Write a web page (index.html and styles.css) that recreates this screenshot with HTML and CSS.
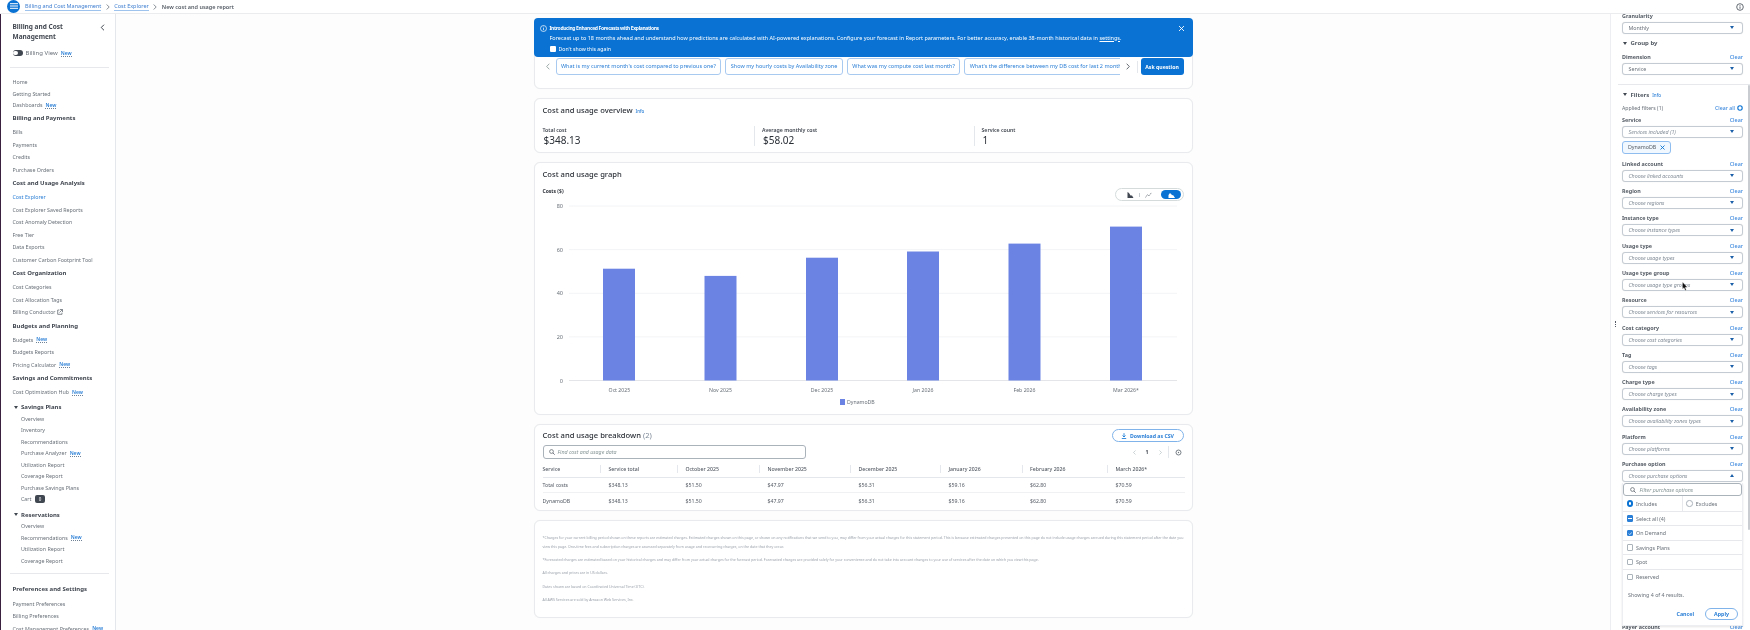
FILE: index.html
```html
<!DOCTYPE html>
<html lang="en">
<head>
<meta charset="utf-8">
<title>New cost and usage report</title>
<link rel="stylesheet" href="styles.css">
</head>
<body>
<div class="page">
  <header class="topbar">
    <button class="menu-btn" aria-label="Menu"><svg width="8" height="6" viewBox="0 0 8 6"><path d="M0 .7h8M0 3h8M0 5.3h8" stroke="#fff" stroke-width="1"/></svg></button>
    <nav class="crumbs">
      <a class="crumb-link">Billing and Cost Management</a><span class="crumb-sep"><svg width="4" height="6" viewBox="0 0 4 6"><path d="M.7.5 3.2 3 .7 5.5" fill="none" stroke="#687078" stroke-width=".8"/></svg></span>
      <a class="crumb-link">Cost Explorer</a><span class="crumb-sep"><svg width="4" height="6" viewBox="0 0 4 6"><path d="M.7.5 3.2 3 .7 5.5" fill="none" stroke="#687078" stroke-width=".8"/></svg></span>
      <span class="crumb-current">New cost and usage report</span>
    </nav>
    <svg class="top-info" width="8" height="8" viewBox="0 0 8 8"><circle cx="4" cy="4" r="3.3" fill="none" stroke="#545b64" stroke-width=".9"/><path d="M4 3.4v2.4M4 2v.8" stroke="#545b64" stroke-width=".9"/></svg>
  </header>

  <div class="layout">
    <aside class="sidebar">
      <div class="side-title-row">
        <h2 class="side-title">Billing and Cost Management</h2>
        <svg class="side-collapse" width="5" height="7" viewBox="0 0 5 7"><path d="M4 .7 1.2 3.5 4 6.3" fill="none" stroke="#414750" stroke-width="1"/></svg>
      </div>
      <div class="billing-view"><span class="switch"></span><span>Billing View</span><span class="new">New</span></div>
      <hr class="side-rule side-rule--first">
      <a class="nav-item nav-item--tight">Home</a>
      <a class="nav-item nav-item--tight">Getting Started</a>
      <a class="nav-item nav-item--tight">Dashboards<span class="new">New</span></a>
      <h3 class="nav-head">Billing and Payments</h3>
      <a class="nav-item">Bills</a>
      <a class="nav-item">Payments</a>
      <a class="nav-item">Credits</a>
      <a class="nav-item">Purchase Orders</a>
      <h3 class="nav-head">Cost and Usage Analysis</h3>
      <a class="nav-item nav-item--active">Cost Explorer</a>
      <a class="nav-item">Cost Explorer Saved Reports</a>
      <a class="nav-item">Cost Anomaly Detection</a>
      <a class="nav-item">Free Tier</a>
      <a class="nav-item">Data Exports</a>
      <a class="nav-item">Customer Carbon Footprint Tool</a>
      <h3 class="nav-head">Cost Organization</h3>
      <a class="nav-item">Cost Categories</a>
      <a class="nav-item">Cost Allocation Tags</a>
      <a class="nav-item">Billing Conductor<svg class="ext" width="6" height="6" viewBox="0 0 6 6"><path d="M2.4 1H.7v4.300h4.300V3.600M3 .5h2.500V3M5.300.7 2.500 3.500" fill="none" stroke="#545b64" stroke-width=".7"/></svg></a>
      <h3 class="nav-head">Budgets and Planning</h3>
      <a class="nav-item">Budgets<span class="new">New</span></a>
      <a class="nav-item">Budgets Reports</a>
      <a class="nav-item">Pricing Calculator<span class="new">New</span></a>
      <h3 class="nav-head">Savings and Commitments</h3>
      <a class="nav-item">Cost Optimization Hub<span class="new">New</span></a>
      <h4 class="nav-sub nav-sub--first"><span class="caret-down"></span>Savings Plans</h4>
      <a class="nav-child">Overview</a>
      <a class="nav-child">Inventory</a>
      <a class="nav-child">Recommendations</a>
      <a class="nav-child">Purchase Analyzer<span class="new">New</span></a>
      <a class="nav-child">Utilization Report</a>
      <a class="nav-child">Coverage Report</a>
      <a class="nav-child">Purchase Savings Plans</a>
      <a class="nav-child">Cart<span class="cart-count">0</span></a>
      <h4 class="nav-sub"><span class="caret-down"></span>Reservations</h4>
      <a class="nav-child">Overview</a>
      <a class="nav-child">Recommendations<span class="new">New</span></a>
      <a class="nav-child">Utilization Report</a>
      <a class="nav-child">Coverage Report</a>
      <hr class="side-rule side-rule--second">
      <h3 class="nav-head nav-head--last">Preferences and Settings</h3>
      <a class="nav-item">Payment Preferences</a>
      <a class="nav-item">Billing Preferences</a>
      <a class="nav-item">Cost Management Preferences<span class="new">New</span></a>
    </aside>

    <main class="main">
      <div class="column">
        <section class="banner">
          <svg class="banner-icon" width="7" height="7" viewBox="0 0 7 7"><circle cx="3.500" cy="3.500" r="3" fill="none" stroke="#fff" stroke-width=".7"/><path d="M3.500 3v2.200M3.500 1.700v.7" stroke="#fff" stroke-width=".7"/></svg>
          <div class="banner-body">
            <strong class="banner-title">Introducing Enhanced Forecasts with Explanations</strong>
            <p class="banner-text">Forecast up to 18 months ahead and understand how predictions are calculated with AI-powered explanations. Configure your forecast in Report parameters. For better accuracy, enable 38-month historical data in <u>settings</u>.</p>
            <label class="banner-check"><span class="banner-box"></span>Don't show this again</label>
          </div>
          <svg class="banner-close" width="7" height="7" viewBox="0 0 7 7"><path d="M1 1l5 5M6 1 1 6" stroke="#fff" stroke-width=".9"/></svg>
        </section>

        <section class="card card--questions">
          <div class="question-row">
            <svg class="q-prev" width="4" height="7" viewBox="0 0 4 7"><path d="M3.300.7.700 3.500l2.600 2.800" fill="none" stroke="#879596" stroke-width=".8"/></svg>
            <div class="chips">
              <span class="chip">What is my current month's cost compared to previous one?</span>
              <span class="chip">Show my hourly costs by Availability zone</span>
              <span class="chip">What was my compute cost last month?</span>
              <span class="chip">What's the difference between my DB cost for last 2 months?</span>
            </div>
            <svg class="q-next" width="4" height="7" viewBox="0 0 4 7"><path d="M.700.7 3.300 3.500.700 6.300" fill="none" stroke="#414750" stroke-width=".8"/></svg>
            <span class="q-sep"></span>
            <button class="ask">Ask question</button>
          </div>
        </section>

        <section class="card card--overview">
          <h2 class="card-title">Cost and usage overview <a class="info">Info</a></h2>
          <div class="stats">
            <div class="stat"><div class="stat-label">Total cost</div><div class="stat-value">$348.13</div></div>
            <div class="stat stat--rule"><div class="stat-label">Average monthly cost</div><div class="stat-value">$58.02</div></div>
            <div class="stat stat--rule"><div class="stat-label">Service count</div><div class="stat-value">1</div></div>
          </div>
        </section>

        <section class="card card--graph">
          <h2 class="card-title">Cost and usage graph</h2>
          <div class="graph-head">
            <span class="axis-title">Costs ($)</span>
            <div class="chart-toggle">
              <span class="toggle-item"><svg width="7" height="6" viewBox="0 0 7 6"><path d="M.500 0v6h6L5 3.500H3.500L2 1z" fill="#414750"/></svg></span>
              <span class="toggle-sep"></span>
              <span class="toggle-item"><svg width="7" height="6" viewBox="0 0 7 6"><path d="M.500 5.500 2.500 2.500 4 4 6.500.5" fill="none" stroke="#687078" stroke-width=".7" stroke-dasharray="1.500 .5"/></svg></span>
              <span class="toggle-item toggle-item--on"><svg width="7" height="6" viewBox="0 0 7 6"><path d="M.500 6V3L2 1l2 2 1.500.5L7 6z" fill="#fff"/></svg></span>
            </div>
          </div>
          <svg class="chart" width="642" height="212" viewBox="0 0 642 212">
            <g class="grid-lines">
              <line x1="26" x2="634" y1="5" y2="5"/><line x1="26" x2="634" y1="48.600" y2="48.600"/><line x1="26" x2="634" y1="92.300" y2="92.300"/><line x1="26" x2="634" y1="135.900" y2="135.900"/>
            </g>
            <line class="axis-line" x1="26" x2="634" y1="179.500" y2="179.500"/>
            <g class="ticks">
              <text x="20" y="7">80</text><text x="20" y="50.600">60</text><text x="20" y="94.300">40</text><text x="20" y="137.900">20</text><text x="20" y="181.500">0</text>
            </g>
            <g class="bars">
              <rect x="60" y="67.700" width="32" height="111.800"/>
              <rect x="161.500" y="74.900" width="32" height="104.600"/>
              <rect x="263" y="56.700" width="32" height="122.800"/>
              <rect x="364" y="50.500" width="32" height="129"/>
              <rect x="465.500" y="42.600" width="32" height="136.900"/>
              <rect x="567" y="25.600" width="32" height="153.900"/>
            </g>
            <g class="months">
              <text x="76.400" y="191">Oct 2025</text><text x="177.500" y="191">Nov 2025</text><text x="279" y="191">Dec 2025</text><text x="380" y="191">Jan 2026</text><text x="481.500" y="191">Feb 2026</text><text x="583" y="191">Mar 2026*</text>
            </g>
            <rect class="legend-swatch" x="297" y="198" width="5" height="6"/>
            <text class="legend-text" x="304" y="203">DynamoDB</text>
          </svg>
        </section>

        <section class="card card--breakdown">
          <div class="breakdown-head">
            <h2 class="card-title card-title--flat">Cost and usage breakdown <span class="count">(2)</span></h2>
            <button class="download"><svg width="6" height="6" viewBox="0 0 6 6"><path d="M3 .2v3.600M1.500 2.500 3 4l1.500-1.500M.8 5.500h4.400" fill="none" stroke="#0972d3" stroke-width=".8"/></svg>Download as CSV</button>
          </div>
          <div class="table-tools">
            <div class="search"><svg width="6" height="6" viewBox="0 0 6 6"><circle cx="2.500" cy="2.500" r="1.900" fill="none" stroke="#545b64" stroke-width=".7"/><path d="M3.900 3.900 5.700 5.700" stroke="#545b64" stroke-width=".8"/></svg><span>Find cost and usage data</span></div>
            <div class="pager">
              <svg width="3" height="5" viewBox="0 0 3 5"><path d="M2.500.5.500 2.500l2 2" fill="none" stroke="#aab7b8" stroke-width=".6"/></svg>
              <span class="pager-num">1</span>
              <svg width="3" height="5" viewBox="0 0 3 5"><path d="M.500.5l2 2-2 2" fill="none" stroke="#aab7b8" stroke-width=".6"/></svg>
              <span class="pager-sep"></span>
              <svg width="7" height="7" viewBox="0 0 7 7"><circle cx="3.500" cy="3.500" r="2.500" fill="none" stroke="#687078" stroke-width=".9"/><circle cx="3.500" cy="3.500" r=".7" fill="#687078"/></svg>
            </div>
          </div>
          <table class="cost-table">
            <thead><tr><th>Service</th><th>Service total</th><th>October 2025</th><th>November 2025</th><th>December 2025</th><th>January 2026</th><th>February 2026</th><th>March 2026*</th></tr></thead>
            <tbody>
              <tr class="row-total"><td>Total costs</td><td>$348.13</td><td>$51.50</td><td>$47.97</td><td>$56.31</td><td>$59.16</td><td>$62.80</td><td>$70.59</td></tr>
              <tr class="row-last"><td>DynamoDB</td><td>$348.13</td><td>$51.50</td><td>$47.97</td><td>$56.31</td><td>$59.16</td><td>$62.80</td><td>$70.59</td></tr>
            </tbody>
          </table>
        </section>

        <section class="card card--notes">
          <p>*Charges for your current billing period shown on these reports are estimated charges. Estimated charges shown on this page, or shown on any notifications that we send to you, may differ from your actual charges for this statement period. This is because estimated charges presented on this page do not include usage charges accrued during this statement period after the date you view this page. One-time fees and subscription charges are assessed separately from usage and reoccurring charges, on the date that they occur.</p>
          <p>*Forecasted charges are estimated based on your historical charges and may differ from your actual charges for the forecast period. Forecasted charges are provided solely for your convenience and do not take into account changes to your use of services after the date on which you view this page.</p>
          <p>All charges and prices are in US dollars.</p>
          <p>Dates shown are based on Coordinated Universal Time (UTC).</p>
          <p>All AWS Services are sold by Amazon Web Services, Inc.</p>
        </section>
      </div>
    </main>

    <aside class="params">
      <span class="drag-handle"></span>
      <span class="scroll-thumb"></span>
      <div class="params-inner">
        <div class="field"><div class="field-label"><span>Granularity</span></div><div class="select">Monthly</div></div>
        <h3 class="param-head param-head--group"><span class="caret-down"></span>Group by</h3>
        <div class="field field--dimension"><div class="field-label"><span>Dimension</span><a>Clear</a></div><div class="select">Service</div></div>
        <hr class="param-rule">
        <h3 class="param-head param-head--filters"><span class="caret-down"></span>Filters <a class="info">Info</a></h3>
        <div class="applied"><span>Applied filters (1)</span><span class="applied-actions"><a>Clear all</a><svg width="6" height="6" viewBox="0 0 6 6"><circle cx="3" cy="3" r="2.200" fill="none" stroke="#0972d3" stroke-width="1.100"/></svg></span></div>
        <div class="field"><div class="field-label"><span>Service</span><a>Clear</a></div><div class="select select--hint">Services included (1)</div></div>
        <div class="token">DynamoDB<svg width="5" height="5" viewBox="0 0 5 5"><path d="M.5.5l4 4M4.500.5l-4 4" stroke="#0972d3" stroke-width=".9"/></svg></div>
        <div class="field"><div class="field-label"><span>Linked account</span><a>Clear</a></div><div class="select select--hint">Choose linked accounts</div></div>
        <div class="field"><div class="field-label"><span>Region</span><a>Clear</a></div><div class="select select--hint">Choose regions</div></div>
        <div class="field"><div class="field-label"><span>Instance type</span><a>Clear</a></div><div class="select select--hint">Choose instance types</div></div>
        <div class="field"><div class="field-label"><span>Usage type</span><a>Clear</a></div><div class="select select--hint">Choose usage types</div></div>
        <div class="field"><div class="field-label"><span>Usage type group</span><a>Clear</a></div><div class="select select--hint">Choose usage type groups</div></div>
        <div class="field"><div class="field-label"><span>Resource</span><a>Clear</a></div><div class="select select--hint">Choose services for resources</div></div>
        <div class="field"><div class="field-label"><span>Cost category</span><a>Clear</a></div><div class="select select--hint">Choose cost categories</div></div>
        <div class="field"><div class="field-label"><span>Tag</span><a>Clear</a></div><div class="select select--hint">Choose tags</div></div>
        <div class="field"><div class="field-label"><span>Charge type</span><a>Clear</a></div><div class="select select--hint">Choose charge types</div></div>
        <div class="field"><div class="field-label"><span>Availability zone</span><a>Clear</a></div><div class="select select--hint">Choose availability zones types</div></div>
        <div class="field"><div class="field-label"><span>Platform</span><a>Clear</a></div><div class="select select--hint">Choose platforms</div></div>
        <div class="field"><div class="field-label"><span>Purchase option</span><a>Clear</a></div><div class="select select--hint select--open">Choose purchase options</div></div>
        <div class="dropdown">
          <div class="drop-filter"><svg width="6" height="6" viewBox="0 0 6 6"><circle cx="2.500" cy="2.500" r="1.900" fill="none" stroke="#545b64" stroke-width=".7"/><path d="M3.900 3.900 5.700 5.700" stroke="#545b64" stroke-width=".8"/></svg><span>Filter purchase options</span></div>
          <div class="radio-row">
            <span class="radio-cell"><span class="radio radio--on"></span>Includes</span>
            <span class="radio-cell radio-cell--right"><span class="radio"></span>Excludes</span>
          </div>
          <div class="opt"><span class="box box--mixed"></span>Select all (4)</div>
          <div class="opt"><span class="box box--on"><svg width="5" height="5" viewBox="0 0 5 5"><path d="M.8 2.600 2 3.800 4.200 1.200" fill="none" stroke="#fff" stroke-width=".8"/></svg></span>On Demand</div>
          <div class="opt"><span class="box"></span>Savings Plans</div>
          <div class="opt"><span class="box"></span>Spot</div>
          <div class="opt opt--last"><span class="box"></span>Reserved</div>
          <div class="drop-count">Showing 4 of 4 results.</div>
          <div class="drop-actions"><a>Cancel</a><button class="apply">Apply</button></div>
        </div>
        <div class="field field--payer"><div class="field-label"><span>Payer account</span><a>Clear</a></div></div>
      </div>
      <svg class="cursor" width="6" height="9" viewBox="0 0 6 9"><path d="M.5 0v7l1.500-1.300L3.300 8.500l1-.5L3.100 5.300H5.300z" fill="#111" stroke="#fff" stroke-width=".3"/></svg>
    </aside>
  </div>
</div>
</body>
</html>
```

FILE: styles.css
```css
* { box-sizing: border-box; }
html, body { margin: 0; height: 630px; overflow: hidden; background: #fff; }
body { font-family: "Noto Sans", "Open Sans", sans-serif; font-size: 5.3px; color: #414750; }
h2, h3, h4, p { margin: 0; }
button { font-family: inherit; padding: 0; border: 0; background: none; }

.page { width: 1750px; height: 630px; display: flex; flex-direction: column; filter: blur(.4px); }

/* top bar */
.topbar { height: 14px; flex: none; display: flex; align-items: center; border-bottom: 1px solid #eaecee; padding-left: 7px; padding-right: 6px; background: #fff; }
.menu-btn { width: 13px; height: 13px; margin-top: -1px; border-radius: 50%; background: #0972d3; display: flex; align-items: center; justify-content: center; }
.crumbs { display: flex; align-items: center; margin-left: 5px; font-size: 5.5px; }
.crumb-link { color: #3f7fd0; border-bottom: .6px solid #9ec3ec; line-height: 7px; }
.crumb-sep { display: flex; width: 13px; justify-content: center; }
.crumb-current { color: #545b64; font-weight: 600; }
.top-info { margin-left: auto; }

.layout { flex: 1; display: flex; min-height: 0; }

/* left nav */
.sidebar { width: 116px; flex: none; overflow: hidden; background: #fff; border-left: 1px solid #3a2140; border-right: 1px solid #e4e7ec; padding-left: 11.5px; padding-top: 8px; color: #687078; }
.side-title-row { display: flex; justify-content: space-between; padding-right: 10px; }
.side-title { width: 70px; font-size: 6.5px; line-height: 10px; font-weight: 700; color: #414750; }
.side-collapse { margin-top: 1.5px; }
.billing-view { display: flex; align-items: center; height: 10px; margin-top: 6px; font-size: 6px; }
.switch { width: 10px; height: 6px; border-radius: 3px; background: #414750; margin-right: 3px; position: relative; }
.switch::after { content: ""; position: absolute; left: .7px; top: .8px; width: 4.4px; height: 4.4px; border-radius: 50%; background: #fff; }
.new { color: #2b7fd6; font-size: 5px; font-weight: 600; margin-left: 3px; border-bottom: .7px dotted #6f8194; line-height: 6px; display: inline-block; }
.side-rule { border: 0; border-top: 1px solid #e6e8ec; margin: 0 0 0 -2.5px; width: 99px; }
.side-rule--first { margin-top: 9px; margin-bottom: 8px; }
.side-rule--second { margin-top: 7px; margin-bottom: 8px; }
.nav-item { display: flex; align-items: center; height: 12.5px; white-space: nowrap; }
.nav-item--tight { height: 11.7px; }
.nav-item--active { color: #2b7fd6; }
.nav-head { height: 14px; line-height: 14px; margin-bottom: 1px; font-size: 6px; font-weight: 700; color: #414750; white-space: nowrap; }
.nav-sub { display: flex; align-items: center; height: 11.4px; margin: 3.7px 0 0; font-size: 6px; font-weight: 700; color: #414750; }
.nav-sub--first { margin-top: 2.8px; }
.caret-down { width: 0; height: 0; border-left: 2px solid transparent; border-right: 2px solid transparent; border-top: 3px solid #414750; margin-left: 1px; margin-right: 3.5px; }
.nav-child { display: flex; align-items: center; height: 11.55px; padding-left: 8.5px; white-space: nowrap; }
.cart-count { margin-left: 3.5px; width: 10px; height: 8px; border-radius: 2px; background: #414750; color: #fff; display: flex; align-items: center; justify-content: center; font-size: 4.5px; }
.ext { margin-left: 1.5px; margin-top: -1px; }

/* main column */
.main { flex: 1; min-width: 0; background: #fdfdfd; overflow: hidden; }
.column { width: 659px; margin: 0 auto; padding-top: 4px; }
.banner { position: relative; z-index: 1; height: 39px; display: flex; background: #0972d3; border-radius: 4px; color: #fff; padding: 7px 8px 0 6.5px; }
.banner-icon { flex: none; }
.banner-body { margin-left: 2.5px; flex: 1; }
.banner-title { display: block; font-size: 5px; letter-spacing: -.35px; line-height: 7px; font-weight: 700; }
.banner-text { font-size: 5.5px; line-height: 8px; margin-top: 1.5px; white-space: nowrap; }
.banner-check { display: flex; align-items: center; height: 8px; margin-top: 3.5px; font-size: 5.2px; }
.banner-box { width: 6px; height: 6px; background: #fff; border-radius: 1px; margin-right: 3px; }
.banner-close { flex: none; }

.card { background: #fff; border: 1px solid #e8eaed; border-radius: 6px; margin-top: 9px; padding: 0 8px; box-shadow: 0 0 1px rgba(0,0,0,.05); }
.card-title { font-size: 7.6px; line-height: 12px; font-weight: 500; color: #2a2f36; }
.card-title--flat { line-height: 13px; }
.info { color: #2b7fd6; font-size: 4.5px; font-weight: 500; margin-left: 1px; }

.card--questions { height: 38px; margin-top: -6px; padding-top: 6px; }
.question-row { display: flex; align-items: center; height: 17px; }
.q-prev { flex: none; margin-left: 3.5px; margin-right: 5.5px; }
.chips { width: 564px; display: flex; gap: 4px; overflow: hidden; flex: none; }
.chip { flex: none; height: 17px; line-height: 15px; padding: 0 4.5px; border: 1px solid #a9caf0; border-radius: 3px; color: #2b7fd6; font-size: 5.5px; white-space: nowrap; background: #fff; }
.q-next { flex: none; margin-left: 6px; margin-right: 7px; }
.q-sep { width: 1px; height: 12px; background: #e4e7ec; flex: none; margin-right: 3px; }
.ask { flex: 1; height: 17px; border-radius: 3px; background: #0972d3; color: #fff; font-size: 5.2px; font-weight: 700; }

.card--overview { height: 55px; padding-top: 5px; }
.stats { display: grid; grid-template-columns: 219.5px 219.5px 1fr; margin-top: 9px; }
.stat-label { font-size: 5.2px; line-height: 8px; font-weight: 600; color: #414750; }
.stat-value { font-size: 10px; line-height: 12px; padding-left: 1px; color: #2a2f36; }
.stat--rule { border-left: 1px solid #e4e7ec; margin-left: -8px; padding-left: 7px; }

.card--graph { height: 253px; padding-top: 5px; }
.graph-head { display: flex; justify-content: space-between; align-items: flex-start; height: 21px; padding-top: 7px; }
.axis-title { font-size: 5px; font-weight: 700; line-height: 8px; color: #2a2f36; }
.chart-toggle { display: flex; align-items: center; width: 68.5px; height: 13px; margin-top: 1px; padding: 0 1.5px 0 9px; border: 1px solid #d5dbdb; border-radius: 7px; background: #fff; }
.toggle-item { display: flex; align-items: center; justify-content: center; width: 10px; }
.toggle-sep { width: .7px; height: 4px; background: #c8cdd2; margin: 0 4px; }
.toggle-item--on { width: 20px; height: 9.5px; margin-left: auto; border-radius: 5px; background: #0972d3; }
.chart { display: block; }
.grid-lines line { stroke: #f3f4f6; stroke-width: 1; }
.axis-line { stroke: #e3e5e9; stroke-width: 1; }
.ticks text { font-size: 5.5px; fill: #687078; text-anchor: end; font-family: "Noto Sans", sans-serif; }
.bars rect { fill: #6b84e4; }
.months text { font-size: 5.2px; fill: #687078; text-anchor: middle; font-family: "Noto Sans", sans-serif; }
.legend-swatch { fill: #6b84e4; }
.legend-text { font-size: 5.2px; fill: #687078; font-family: "Noto Sans", sans-serif; }

.card--breakdown { height: 87px; padding-top: 4px; }
.breakdown-head { display: flex; justify-content: space-between; align-items: center; height: 13px; }
.count { color: #7d8998; font-weight: 400; }
.download { display: flex; align-items: center; justify-content: center; gap: 3px; width: 72px; height: 13px; border: 1px solid #7fb3ea; border-radius: 7px; color: #2b7fd6; font-size: 5.2px; font-weight: 700; background: #fff; }
.table-tools { display: flex; justify-content: space-between; align-items: center; margin-top: 3px; height: 14px; }
.search { display: flex; align-items: center; gap: 3px; width: 263px; height: 14px; padding-left: 5px; border: 1px solid #aab2ba; border-radius: 3px; font-style: italic; color: #879596; }
.pager { display: flex; align-items: center; color: #414750; font-size: 5.2px; font-weight: 700; padding-right: 2px; }
.pager-num { margin: 0 10px; }
.pager-sep { width: 1px; height: 12px; background: #e4e7ec; margin: 0 6px; }
.cost-table { width: 642px; border-collapse: collapse; table-layout: fixed; margin-top: 3px; font-size: 5.2px; }
.cost-table th { height: 15px; padding: 0; text-align: left; font-weight: 500; color: #545b64; border-bottom: 1px solid #e4e7ec; position: relative; }
.cost-table th + th::before { content: ""; position: absolute; left: -8.5px; top: 3px; height: 8px; border-left: 1px solid #e4e7ec; }
.cost-table th:nth-child(1) { width: 66px; }
.cost-table th:nth-child(2) { width: 77px; }
.cost-table th:nth-child(3) { width: 82px; }
.cost-table th:nth-child(4) { width: 91px; }
.cost-table th:nth-child(5) { width: 90px; }
.cost-table th:nth-child(6) { width: 81.5px; }
.cost-table th:nth-child(7) { width: 85.5px; }
.cost-table td { padding: 0; color: #545b64; }
.row-total td { height: 15px; border-bottom: 1px solid #f0f1f3; }
.row-last td { height: 18px; }

.card--notes { height: 98px; padding-top: 11.5px; }
.card--notes p { font-size: 3.55px; line-height: 9px; margin-bottom: 4.4px; color: #9aa1aa; }

/* right panel */
.params { width: 140px; flex: none; position: relative; overflow: hidden; background: #fff; border-left: 1px solid #eceef1; }
.params-inner { margin-top: -7.3px; padding: 0 7px 0 11px; }
.drag-handle { position: absolute; left: 4px; top: 307px; height: 6px; border-left: 1px dotted #545b64; }
.scroll-thumb { position: absolute; right: 0; top: 71px; width: 2px; height: 445px; background: #c9ccd1; border-radius: 1px; }
.cursor { position: absolute; left: 71px; top: 268px; }
.field { height: 27.3px; }
.field-label { display: flex; justify-content: space-between; align-items: center; height: 15.3px; padding: 5px 0 1.7px; font-size: 5.4px; font-weight: 700; color: #545b64; }
.field-label a, .applied a { color: #3f8ade; font-weight: 500; }
.select { position: relative; height: 12px; line-height: 10px; padding-left: 5.5px; border: 1px solid #c5cbd2; border-radius: 3px; background: #fff; font-size: 5.3px; color: #687078; box-shadow: 0 0 1px rgba(0,0,0,.15); }
.select::after { content: ""; position: absolute; right: 8px; top: 3.4px; border-left: 2px solid transparent; border-right: 2px solid transparent; border-top: 3px solid #1b5fa8; }
.select--hint { font-style: italic; color: #808b96; }
.select--open::after { border-top: 0; border-bottom: 3px solid #1b5fa8; }
.param-head { display: flex; align-items: center; height: 9px; font-size: 6px; font-weight: 700; color: #545b64; }
.param-head .info { margin-left: 3px; }
.param-head--group { margin-top: 4.5px; }
.param-head--filters { margin-top: 5.5px; }
.param-rule { border: 0; border-top: 1px solid #e6e8ec; margin: 9px -7px 0 -4px; }
.applied { display: flex; justify-content: space-between; align-items: center; height: 4.7px; margin-top: 6.5px; font-size: 5.2px; color: #687078; }
.applied-actions { display: flex; align-items: center; gap: 2px; }
.token { display: flex; align-items: center; gap: 4px; width: 49px; height: 13px; margin-top: 3px; margin-bottom: .7px; padding-left: 5px; border: 1px solid #8fbdf0; border-radius: 3px; background: #f1f8ff; font-size: 5.3px; color: #545b64; }
.dropdown { position: relative; z-index: 1; height: 142.5px; margin-bottom: -3px; border: 1px solid #eceef1; border-top: 0; background: #fff; box-shadow: 0 1px 2px rgba(0,0,0,.1); font-size: 5.3px; color: #687078; }
.drop-filter { display: flex; align-items: center; gap: 4px; height: 13px; margin-top: 1px; padding-left: 5.5px; border: 1px solid #aab2ba; border-radius: 3px; font-style: italic; color: #879596; }
.radio-row { display: flex; height: 16px; border-bottom: 1px solid #e6e8ec; }
.radio-cell { flex: 1; display: flex; align-items: center; gap: 3px; padding-left: 3.5px; }
.radio-cell--right { padding-left: 3px; border-left: 1px solid #e6e8ec; }
.radio { width: 6.5px; height: 6.5px; border-radius: 50%; border: 1px solid #aab2ba; background: #fff; }
.radio--on { border: 2px solid #0972d3; }
.opt { display: flex; align-items: center; gap: 3px; height: 14.4px; padding-left: 3.5px; border-bottom: 1px solid #e6e8ec; }
.opt--last { border-bottom: 0; }
.box { display: flex; align-items: center; justify-content: center; width: 6.5px; height: 6.5px; border: .7px solid #aab2ba; border-radius: 1px; background: #fff; }
.box--on, .box--mixed { background: #2b7fd6; border-color: #2b7fd6; }
.box--mixed::after { content: ""; width: 3.5px; height: .8px; background: #fff; }
.drop-count { margin-top: 7.5px; padding-left: 5px; line-height: 8px; }
.drop-actions { display: flex; justify-content: flex-end; align-items: center; gap: 11px; margin-top: 8.5px; padding-right: 4px; }
.drop-actions a { color: #2b7fd6; font-weight: 700; }
.apply { width: 33px; height: 12px; border: 1px solid #7fb3ea; border-radius: 6px; background: #fff; color: #2b7fd6; font-size: 5.3px; font-weight: 700; }
.field--payer { height: 10px; }
.field--payer .field-label { height: 8.6px; padding: 0; }
```
